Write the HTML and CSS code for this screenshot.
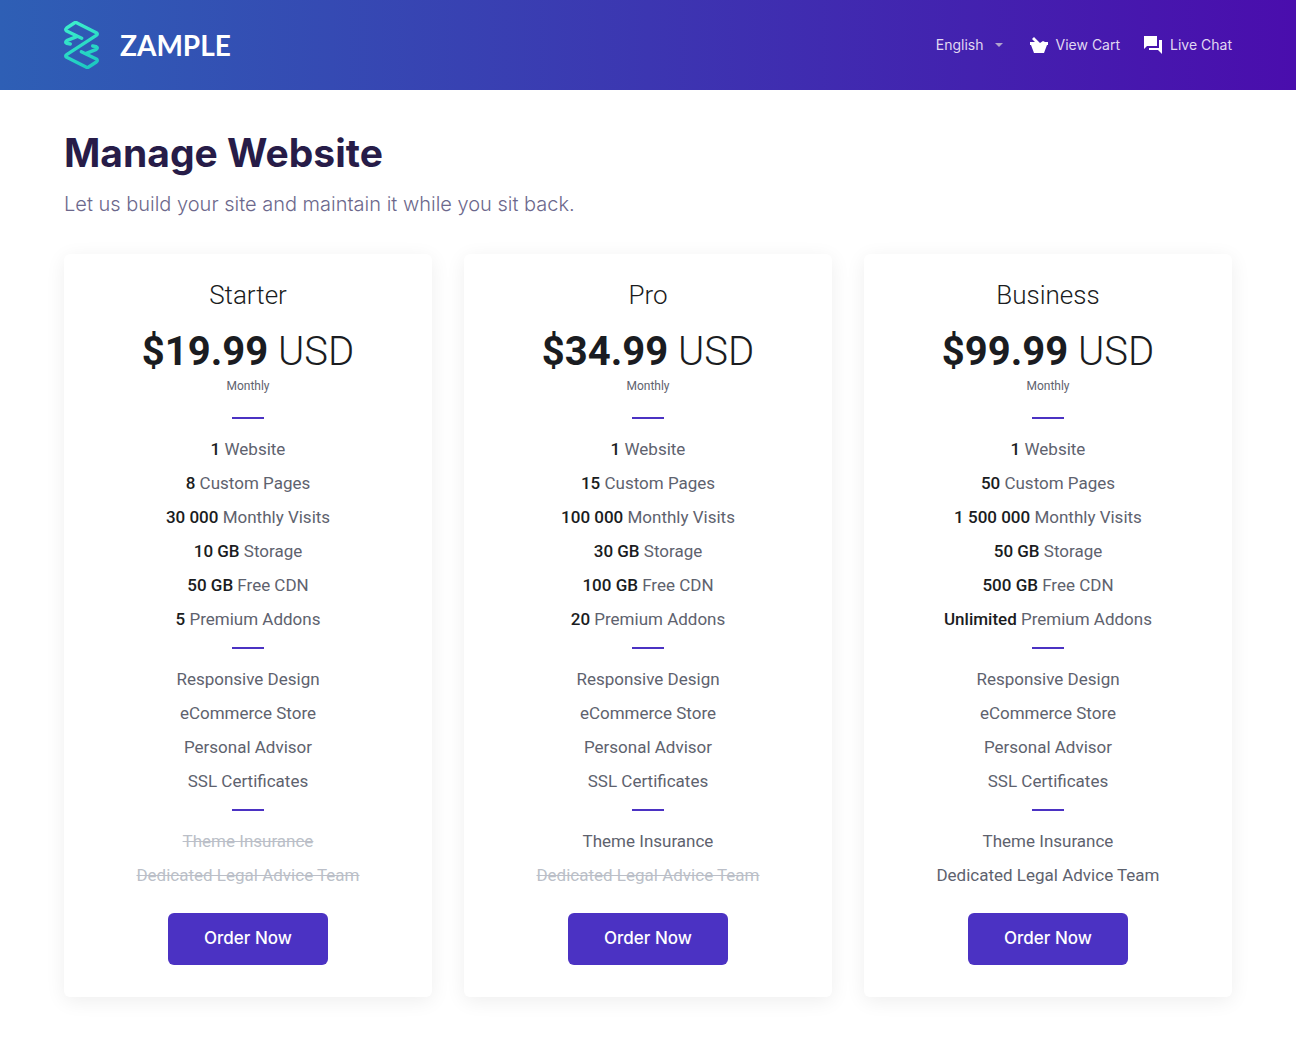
FILE: index.html
```html
<!DOCTYPE html>
<html lang="en">
<head>
<meta charset="utf-8">
<meta name="viewport" content="width=device-width, initial-scale=1">
<title>Manage Website - Zample</title>
<link rel="stylesheet" href="styles.css">
</head>
<body>
<header class="topbar">
  <a class="brand" href="#">
    <svg class="brand-mark" viewBox="12 9 108 144" aria-hidden="true">
      <defs><linearGradient id="mark" gradientUnits="userSpaceOnUse" x1="30" y1="10" x2="90" y2="150"><stop offset="0" stop-color="#3df0cc"/><stop offset="1" stop-color="#1cc8c0"/></linearGradient></defs>
      <g fill="none" stroke="url(#mark)" stroke-width="10" stroke-linejoin="round" stroke-linecap="round">
        <path d="M65 61L20 39Q14 35 20 30L43 15Q47 12 51 15L109 44Q115 48 109 52L20 110Q14 114 20 118L78 147Q82 150 86 147L109 132Q115 127 109 123L64 101"/>
        <path d="M50 56L20 68Q14 73 20 76L31 78M79 106L109 94Q115 89 109 86L98 84"/>
      </g>
    </svg>
    <span class="brand-name">ZAMPLE</span>
  </a>
  <nav class="tools">
    <button class="tool language" type="button">English
      <svg class="caret" viewBox="0 0 8 4" aria-hidden="true"><path d="M0 0h8L4 4z"/></svg>
    </button>
    <a class="tool" href="#">
      <svg class="icon" viewBox="0 0 18 18" aria-hidden="true"><path d="M0 6h5L2 3l2-2 6 6 3-2 2 1h3v3h-1l-3 8H4L1 9H0z"/></svg>
      View Cart</a>
    <a class="tool" href="#">
      <svg class="icon" viewBox="0 0 18 18" aria-hidden="true"><path d="M0 0h13v10H3l-3 3zM15 4h3v14l-4-4H5v-2h10z"/></svg>
      Live Chat</a>
  </nav>
</header>
<main class="page">
  <h1 class="title">Manage Website</h1>
  <p class="subtitle">Let us build your site and maintain it while you sit back.</p>
  <div class="plans">
    <section class="plan">
      <h2 class="plan-name">Starter</h2>
      <p class="price"><strong>$19.99</strong> USD</p>
      <p class="cycle">Monthly</p>
      <ul class="features">
        <li><b>1</b> Website</li><li><b>8</b> Custom Pages</li><li><b>30 000</b> Monthly Visits</li><li><b>10 GB</b> Storage</li><li><b>50 GB</b> Free CDN</li><li><b>5</b> Premium Addons</li>
      </ul>
      <ul class="features">
        <li>Responsive Design</li><li>eCommerce Store</li><li>Personal Advisor</li><li>SSL Certificates</li>
      </ul>
      <ul class="features">
        <li><del>Theme Insurance</del></li><li><del>Dedicated Legal Advice Team</del></li>
      </ul>
      <button class="order" type="button">Order Now</button>
    </section>
    <section class="plan">
      <h2 class="plan-name">Pro</h2>
      <p class="price"><strong>$34.99</strong> USD</p>
      <p class="cycle">Monthly</p>
      <ul class="features">
        <li><b>1</b> Website</li><li><b>15</b> Custom Pages</li><li><b>100 000</b> Monthly Visits</li><li><b>30 GB</b> Storage</li><li><b>100 GB</b> Free CDN</li><li><b>20</b> Premium Addons</li>
      </ul>
      <ul class="features">
        <li>Responsive Design</li><li>eCommerce Store</li><li>Personal Advisor</li><li>SSL Certificates</li>
      </ul>
      <ul class="features">
        <li>Theme Insurance</li><li><del>Dedicated Legal Advice Team</del></li>
      </ul>
      <button class="order" type="button">Order Now</button>
    </section>
    <section class="plan">
      <h2 class="plan-name">Business</h2>
      <p class="price"><strong>$99.99</strong> USD</p>
      <p class="cycle">Monthly</p>
      <ul class="features">
        <li><b>1</b> Website</li><li><b>50</b> Custom Pages</li><li><b>1 500 000</b> Monthly Visits</li><li><b>50 GB</b> Storage</li><li><b>500 GB</b> Free CDN</li><li><b>Unlimited</b> Premium Addons</li>
      </ul>
      <ul class="features">
        <li>Responsive Design</li><li>eCommerce Store</li><li>Personal Advisor</li><li>SSL Certificates</li>
      </ul>
      <ul class="features">
        <li>Theme Insurance</li><li>Dedicated Legal Advice Team</li>
      </ul>
      <button class="order" type="button">Order Now</button>
    </section>
  </div>
</main>
</body>
</html>
```
FILE: styles.css
```css
* { box-sizing: border-box; }
body, h1, h2, p, ul { margin: 0; padding: 0; }
body { background: #fff; color: #1a1c21; font-family: Roboto, sans-serif; }
.topbar { display: flex; align-items: center; justify-content: space-between; height: 90px; padding: 0 64px; background: linear-gradient(90deg, #2e5fb5, #4a0dad); }
.brand { display: flex; align-items: center; gap: 20px; color: #fff; text-decoration: none; }
.brand-mark { width: 36px; height: 48px; }
.brand-name { font: 700 28px/32px Lato, sans-serif; }
.tools { display: flex; align-items: center; gap: 24px; }
.tool { display: flex; align-items: center; gap: 8px; padding: 0; border: 0; background: none; color: #e0d8f2; font: 400 14px/20px Inter, sans-serif; text-decoration: none; }
.language { gap: 11px; margin-right: 3px; }
.caret { width: 8px; height: 4px; fill: #b0a4cc; }
.icon { width: 18px; height: 18px; fill: #fff; }
.page { padding: 39px 64px 56px; }
.title { color: #271c48; font: 700 39px/48px Inter, sans-serif; }
.subtitle { margin: 12px 0 35px; color: #6c688c; font: 300 20px/30px Inter, sans-serif; }
.plans { display: grid; grid-template-columns: repeat(auto-fit, minmax(280px, 1fr)); gap: 32px; }
.plan { display: flex; flex-direction: column; align-items: center; padding: 24px 24px 32px; border-radius: 6px; background: #fff; box-shadow: 0 4px 20px rgba(0, 0, 0, 0.07); text-align: center; }
.plan-name { font-size: 26px; line-height: 34px; font-weight: 300; }
.price { margin-top: 14px; font-size: 40px; line-height: 52px; font-weight: 300; }
.price strong { font-weight: 700; }
.cycle { color: #5e626e; font-size: 12px; line-height: 16px; }
.features { list-style: none; color: #5e626e; font-size: 17px; line-height: 34px; }
.features::before { content: ""; display: block; width: 32px; height: 2px; margin: 11px auto 13px; background: #4b32c3; }
.cycle + .features::before { margin-top: 23px; }
.features b { color: #1a1c21; font-weight: 500; }
.features del { color: #bbbfc8; }
.order { width: 160px; height: 52px; margin-top: 21px; padding: 0 0 2px; border: 0; border-radius: 6px; background: #4b32c3; color: #fff; font: 500 17px/24px Inter, sans-serif; }
```
